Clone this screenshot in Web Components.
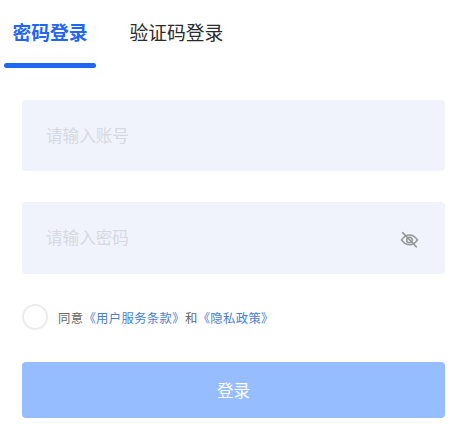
<!DOCTYPE html>
<html lang="zh">
<head>
<meta charset="utf-8">
<style>
  html, body { margin: 0; background: #fff; }
  body { font-family: "Noto Sans CJK SC", "Noto Sans", sans-serif; }
</style>
</head>
<body>
<login-page></login-page>
<script>
class LoginTabs extends HTMLElement {
  constructor() {
    super();
    this.attachShadow({ mode: 'open' });
    this.shadowRoot.innerHTML = `
      <style>
        :host { display: flex; height: 68px; padding-left: 4px; gap: 33.500px; }
        .tab { display: flex; flex-direction: column; align-items: center; font-size: 18.800px; line-height: 28px; padding-top: 18px; color: #2b2b2b; box-sizing: border-box; }
        .on { width: 92px; color: #1f66f2; font-weight: 700; }
        .on i { display: block; width: 92px; height: 5px; margin-top: 17px; border-radius: 3px; background: #1f66f2; }
      </style>
      <div class="tab on">密码登录<i></i></div>
      <div class="tab">验证码登录</div>
    `;
  }
}

class LoginField extends HTMLElement {
  constructor() {
    super();
    this.attachShadow({ mode: 'open' });
    this.shadowRoot.innerHTML = `
      <style>
        :host { display: flex; align-items: center; justify-content: space-between; box-sizing: border-box; height: var(--h, 71px); padding: 0 26px 2px 24px; border-radius: 4px; background: #f0f3fc; color: #d6d9e2; font-size: 16.600px; }
      </style>
      <slot></slot>
      <slot name="icon"></slot>
    `;
  }
}

class LoginAgree extends HTMLElement {
  constructor() {
    super();
    this.attachShadow({ mode: 'open' });
    this.shadowRoot.innerHTML = `
      <style>
        :host { display: flex; align-items: center; gap: 10px; height: 26px; font-size: 12.350px; letter-spacing: 0.350px; color: #666; }
        .dot { width: 26px; height: 26px; box-sizing: border-box; border: 2px solid #ececee; border-radius: 50%; }
        .txt { padding-top: 2px; white-space: nowrap; }
        a { color: #4a80cc; }
      </style>
      <div class="dot"></div>
      <div class="txt">同意<a>《用户服务条款》</a>和<a>《隐私政策》</a></div>
    `;
  }
}

class LoginButton extends HTMLElement {
  constructor() {
    super();
    this.attachShadow({ mode: 'open' });
    this.shadowRoot.innerHTML = `
      <style>
        :host { display: flex; align-items: center; justify-content: center; height: 56px; border-radius: 4px; background: #95bdff; color: #fff; font-size: 16.500px; }
      </style>
      <slot></slot>
    `;
  }
}

class LoginPage extends HTMLElement {
  constructor() {
    super();
    this.attachShadow({ mode: 'open' });
    this.shadowRoot.innerHTML = `
      <style>
        :host { display: block; width: 468px; height: 426px; overflow: hidden; }
        .form { display: flex; flex-direction: column; padding: 32px 23px 0 22px; }
        .pass { margin-top: 31px; --h: 72px; }
        login-agree { margin-top: 30px; }
        login-button { margin-top: 32px; }
        svg { display: block; margin-top: 4px; }
      </style>
      <login-tabs></login-tabs>
      <div class="form">
        <login-field>请输入账号</login-field>
        <login-field class="pass">请输入密码
          <svg slot="icon" width="19" height="19" viewBox="0 0 18 18" fill="none" stroke="#969a9a" stroke-width="1.500" stroke-linecap="round">
            <path d="M1.500 9.500C3.700 6.300 6.200 4.800 9 4.800s5.300 1.500 7.500 4.700c-2.200 3-4.700 4.500-7.500 4.500s-5.300-1.500-7.500-4.500z"/>
            <circle cx="9" cy="9.500" r="2.600"/>
            <path d="M2.500 2.500l13 13.500"/>
          </svg>
        </login-field>
        <login-agree></login-agree>
        <login-button>登录</login-button>
      </div>
    `;
  }
}

customElements.define('login-tabs', LoginTabs);
customElements.define('login-field', LoginField);
customElements.define('login-agree', LoginAgree);
customElements.define('login-button', LoginButton);
customElements.define('login-page', LoginPage);
</script>
</body>
</html>
